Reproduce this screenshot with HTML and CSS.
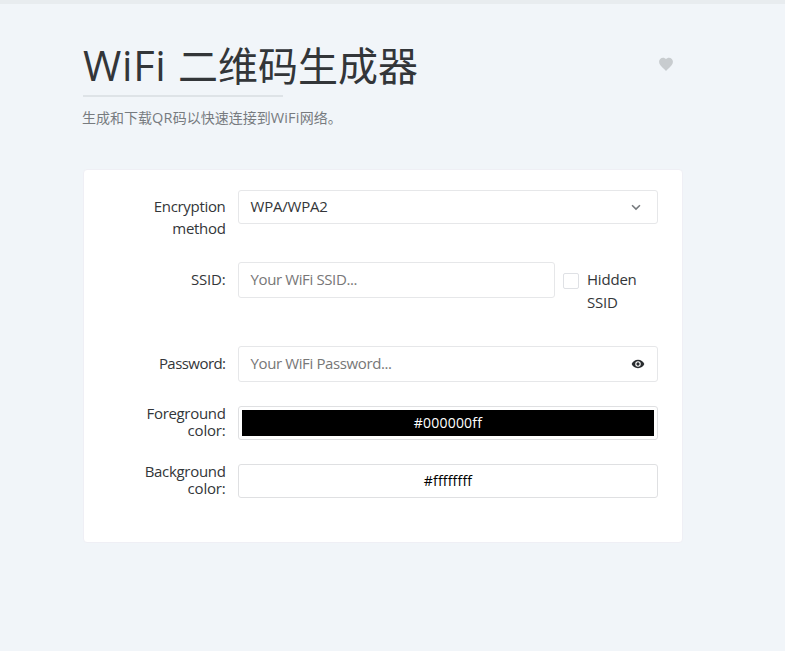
FILE: index.html
```html
<!DOCTYPE html>
<html lang="zh">
<head>
<meta charset="utf-8">
<title>WiFi 二维码生成器</title>
<link rel="stylesheet" href="styles.css">
</head>
<body>
<main class="tool">
  <header class="head">
    <div class="title-row">
      <h1 class="title"><span class="title-latin">WiFi </span>二维码生成器</h1>
      <svg class="heart" viewBox="0 0 512 512"><path fill="currentColor" d="M256 476L219 443C105 340 34 274 34 185 34 113 90 58 161 58c38 0 73 17 95 45 22-28 57-45 95-45 71 0 127 55 127 127 0 89-71 155-185 258z"/></svg>
    </div>
    <div class="separator"></div>
    <p class="description">生成和下载<span class="desc-latin">QR</span>码以快速连接到<span class="desc-latin">WiFi</span>网络。</p>
  </header>
  <section class="card">
    <div class="row row-encryption">
      <label class="label"><span class="line">Encryption</span><span class="line">method</span></label>
      <div class="field select"><span class="value">WPA/WPA2</span>
        <svg class="chevron" viewBox="0 0 16 16"><path fill="none" stroke="currentColor" stroke-width="1.8" d="M3.5 6L8 10.4 12.5 6"/></svg>
      </div>
    </div>
    <div class="row row-ssid">
      <label class="label"><span class="line narrow">SSID:</span></label>
      <div class="field ssid"><span class="placeholder">Your WiFi SSID...</span></div>
      <div class="check"><span class="box"></span><span class="check-label"><span class="line">Hidden</span><span class="line">SSID</span></span></div>
    </div>
    <div class="row row-password">
      <label class="label"><span class="line password">Password:</span></label>
      <div class="field"><span class="placeholder">Your WiFi Password...</span>
        <svg class="eye" viewBox="0 0 512 512"><path fill="currentColor" fill-rule="evenodd" d="M256 105C151 105 61 168 24 256c37 88 127 151 232 151s195-63 232-151c-37-88-127-151-232-151zm0 251a100 100 0 1 1 0-200 100 100 0 0 1 0 200zm0-160a60 60 0 1 0 0 120 60 60 0 0 0 0-120z"/></svg>
      </div>
    </div>
    <div class="row row-color">
      <label class="label tight"><span class="line">Foreground</span><span class="line narrow">color:</span></label>
      <div class="field color"><div class="swatch black">#000000ff</div></div>
    </div>
    <div class="row row-color">
      <label class="label tight"><span class="line">Background</span><span class="line narrow">color:</span></label>
      <div class="field color"><div class="swatch white">#ffffffff</div></div>
    </div>
  </section>
</main>
</body>
</html>
```
FILE: styles.css
```css
* { box-sizing: border-box; }
body {
  margin: 0;
  height: 651px;
  overflow: hidden;
  background: #f1f5f9;
  border-top: 4px solid #e8ecef;
  color: #333639;
  font: 15px/22.4px "Open Sans", "Noto Sans", "Noto Sans CJK SC", sans-serif;
}
.tool { width: 600px; margin-left: 83px; }
.head { height: 165px; padding-top: 36px; }
.title-row { display: flex; justify-content: space-between; height: 55px; }
.title { margin: 0; font-size: 40px; line-height: 50px; font-weight: 400; white-space: nowrap; }
.title-latin { font-size: 41.5px; letter-spacing: 0.7px; }
.heart { width: 16px; height: 16px; margin: 16px 9.5px 0 0; color: #c8cccf; }
.separator { width: 200px; height: 2px; background: #dee3e7; }
.description { margin: 10px 0 0 -1px; font-size: 14px; line-height: 22px; color: #777b7f; white-space: nowrap; }
.desc-latin { font-size: 14.5px; letter-spacing: 0.2px; }
.card { height: 374px; padding: 20px 24px; background: #fff; border: 1px solid #efeff5; border-radius: 4px; }
.row { display: flex; align-items: flex-start; }
.row-encryption { height: 72px; }
.row-ssid { height: 84px; }
.row-password { height: 60px; }
.row-color { height: 58px; }
.label { width: 130px; padding: 5px 12.5px 0 0; text-align: right; flex: none; white-space: nowrap; letter-spacing: -0.32px; }
.row-ssid .label, .row-password .label { padding-top: 6px; }
.line { display: block; }
.narrow { letter-spacing: -0.2px; }
.password { letter-spacing: -0.55px; }
.label.tight { padding-top: 0; margin-top: -1px; line-height: 17px; }
.field { display: flex; align-items: center; flex: 1; height: 36px; padding: 0 12px 0 11.5px; border: 1px solid #e6e7e9; border-radius: 3px; white-space: nowrap; }
.value, .placeholder { padding-bottom: 2px; }
.value { letter-spacing: -0.2px; }
.select { height: 34px; }
.ssid { flex: 0 0 317px; }
.placeholder { color: #777; letter-spacing: -0.38px; }
.chevron { width: 14px; height: 14px; margin-left: auto; margin-right: 2px; color: #75797d; }
.eye { width: 14px; height: 14px; margin-left: auto; color: #292c2f; }
.check { display: flex; padding: 6px 0 0 8px; }
.check-label { letter-spacing: -0.2px; line-height: 23px; }
.box { width: 16px; height: 16px; margin: 5px 8px 0 0; border: 1px solid #dfe1e5; border-radius: 2px; }
.field.color { height: 34px; padding: 3px; border-color: #dfe0e2; }
.swatch { flex: 1; height: 26px; line-height: 26px; text-align: center; font-size: 14px; letter-spacing: 0.2px; }
.black { background: #000; color: #fff; }
.white { background: #fff; color: #000; }
```
